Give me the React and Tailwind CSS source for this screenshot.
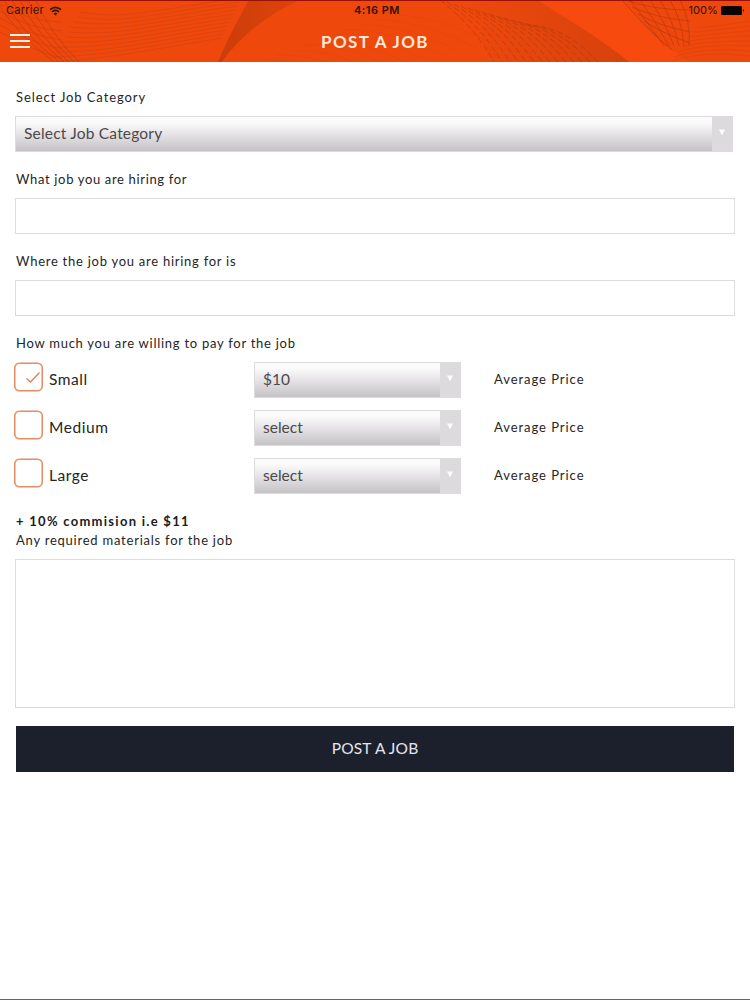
import React, { useState } from 'react'

const SIZES = [
  { name: 'Small', price: '$10' },
  { name: 'Medium', price: 'select' },
  { name: 'Large', price: 'select' },
]

const range = (n) => Array.from({ length: n }, (_, i) => i)

// Wavy mesh behind the header
function HeaderMesh() {
  return (
    <svg className="absolute inset-0" width="750" height="62" viewBox="0 0 750 62" fill="none">
      <defs>
        <linearGradient id="fold" x1="0" y1="0" x2="1" y2="0">
          <stop offset="0" stopColor="#a83208" stopOpacity="0.5" />
          <stop offset="1" stopColor="#b83708" stopOpacity="0.3" />
        </linearGradient>
        <linearGradient id="slope" x1="0" y1="0" x2="1" y2="0">
          <stop offset="0" stopColor="#b83a0c" stopOpacity="0" />
          <stop offset="1" stopColor="#b83a0c" stopOpacity="0.45" />
        </linearGradient>
      </defs>
      <rect width="750" height="62" fill="#ee480c" />
      <path d="M537 0H625C645 24 660 45 690 62H629C600 38 565 18 537 0Z" fill="#f64a0e" />
      <path d="M218 62 C228 38 240 16 249 0 L300 0 C270 13 240 36 222 62Z" fill="url(#fold)" />
      <path d="M470 0 L537 0 C565 18 600 38 629 62 L490 62Z" fill="url(#slope)" />
      <g stroke="#a83a14" strokeWidth="0.8" opacity="0.28">
        {range(11).map((i) => (
          <path key={i} d={`M${50 + i * 3} ${62 - i * 5} C${100 + i * 3} ${60 - i * 4} ${150} ${50 - i * 4} ${222 + i * 2} ${38 - i * 4}`} />
        ))}
        {range(10).map((i) => (
          <path key={i} d={`M${262 + i * 14} ${60 - i * 5} q40 -2 ${80 + i * 3} ${20 + i}`} opacity="0.35" />
        ))}
      </g>
      <g stroke="#8f3010" strokeWidth="0.8" opacity="0.4">
        {range(6).map((i) => (
          <path key={i} d={`M${-4 + i * 8} 0 Q${14 + i * 7} 32 ${54 + i * 5} 62`} />
        ))}
        {range(5).map((i) => (
          <path key={i} d={`M0 ${4 + i * 7} Q30 ${22 + i * 7} 62 ${22 + i * 9}`} opacity="0.6" />
        ))}
      </g>
      <g stroke="#8f3010" strokeWidth="0.9" strokeDasharray="6 3" opacity="0.42">
        {range(14).map((i) => (
          <path key={i} d={`M${440 + i * 7} ${i * 2} Q${474 + i * 7} 26 ${494 + i * 8} 62`} />
        ))}
      </g>
      <g stroke="#8a2c0e" strokeWidth="0.8" opacity="0.55">
        <path d="M622 0 C640 20 650 32 672 50" />
        {range(6).map((i) => (
          <path key={i} d={`M${630 + i * 10} 0 Q${646 + i * 9} 20 ${664 + i * 5} 46`} opacity="0.75" />
        ))}
        {range(4).map((i) => (
          <path key={i} d={`M${626 + i * 6} ${i * 7} Q${652 + i * 4} ${10 + i * 8} 690 ${10 + i * 11}`} opacity="0.75" />
        ))}
        {range(8).map((i) => (
          <path key={i} d={`M${670 + i * 4} ${62 - i * 5} Q700 ${50 - i * 3} 750 ${56 - i * 5}`} opacity="0.25" />
        ))}
      </g>
      <rect width="750" height="1" fill="#9c0f08" />
    </svg>
  )
}

function Label({ children, className = 'tracking-[0.74px]' }) {
  return (
    <div className={`h-5 mb-2 pl-px text-[13px] leading-[18px] text-[#252525] whitespace-nowrap ${className}`}>
      {children}
    </div>
  )
}

function Select({ value, className }) {
  return (
    <div className={`flex h-9 border border-[#dddbde] ${className}`}>
      <div className="flex-1 pl-2 text-[15.5px] leading-[33px] text-[#4b494c] bg-linear-to-b from-[#fcfbfc] from-15% via-[#e2e0e3] via-55% to-[#c6c3c7]">
        {value}
      </div>
      <div className="w-5 pt-3 bg-[#dcdadd] flex justify-center">
        <svg width="8" height="7" viewBox="0 0 8 7" className="mr-px">
          <path d="M1 0.5h6L4 6.5z" fill="#fff" />
        </svg>
      </div>
    </div>
  )
}

function Checkbox({ checked, onChange }) {
  return (
    <button onClick={onChange} className="w-7 h-7 -ml-px mr-px translate-x-[0.5px] rounded-[5px] border-[1.5px] border-[#e58a62] bg-white shadow-[0_0_0_0.5px_#e58a62]">
      {checked && (
        <svg width="25" height="25" viewBox="0 0 25 25" fill="none">
          <path d="M11 13.5l4 3.5 9-9.5" stroke="#e2804f" strokeWidth="1.3" />
        </svg>
      )}
    </button>
  )
}

export default function App() {
  const [selected, setSelected] = useState('Small')

  return (
    <div className="w-[750px] h-[1000px] flex flex-col bg-white border-b border-[#666] overflow-hidden font-['Lato','Liberation_Sans',sans-serif]">
      {/* Header */}
      <header className="relative h-[62px] shrink-0">
        <HeaderMesh />
        <div className="relative grid grid-cols-3 items-center h-[21px] pl-1.5 pr-[5px] text-[11px] text-[#321008] font-['Inter',sans-serif]">
          <div className="flex items-center gap-[5px]">
            <span className="tracking-[0.25px]">Carrier</span>
            <svg width="13" height="10" viewBox="0 0 13 10" fill="none" stroke="#321008" strokeWidth="1.6">
              <path d="M1 3.6Q6.5 -1 12 3.6M3 5.8Q6.5 3 10 5.8" />
              <path d="M4.6 7.4Q6.5 6 8.4 7.4L6.5 9.5z" fill="#321008" stroke="none" />
            </svg>
          </div>
          <div className="text-center font-semibold tracking-[0.5px] pl-[3px]">4:16 PM</div>
          <div className="flex items-center justify-end gap-[3px]">
            <span className="tracking-[0.1px]">100%</span>
            <svg width="24" height="9" viewBox="0 0 24 9" fill="#0c0301">
              <rect width="21" height="9" rx="1.5" />
              <path d="M22 3q2 1.5 0 3z" />
            </svg>
          </div>
        </div>
        <div className="relative flex items-center h-[41px] px-2.5">
          <div className="w-5 flex flex-col gap-1 pb-px">
            <span className="h-0.5 bg-[#fff0e4]" />
            <span className="h-0.5 bg-[#fff0e4]" />
            <span className="h-0.5 bg-[#fff0e4]" />
          </div>
          <h1 className="flex-1 text-center pr-5 text-[17px] font-bold tracking-[1.4px] text-[#ffe9d8]">POST A JOB</h1>
        </div>
      </header>

      {/* Form */}
      <main className="px-[15px] pt-[26px]">
        <Label className="tracking-[0.9px]">Select Job Category</Label>
        <Select value={<span className="tracking-[0.2px]">Select Job Category</span>} className="w-[718px] mb-[18px]" />

        <Label className="tracking-[0.66px]">What job you are hiring for</Label>
        <input className="block w-full h-9 mb-[18px] px-2 border border-[#dcdcdc] outline-none" />

        <Label>Where the job you are hiring for is</Label>
        <input className="block w-full h-9 mb-[18px] px-2 border border-[#dcdcdc] outline-none" />

        <Label>How much you are willing to pay for the job</Label>
        <div className="flex flex-col gap-3">
          {SIZES.map((size) => (
            <div key={size.name} className="flex h-9">
              <div className="flex w-[239px] pt-px">
                <Checkbox checked={selected === size.name} onChange={() => setSelected(size.name)} />
                <span className="pl-1.5 text-[15.5px] leading-8 tracking-[0.55px] text-[#252525]">{size.name}</span>
              </div>
              <Select value={size.price} className="w-[207px]" />
              <span className="pl-[33px] text-[13px] leading-[35px] tracking-[0.95px] text-[#252525]">Average Price</span>
            </div>
          ))}
        </div>

        <div className="mt-[17px] pl-px h-5 text-[13px] leading-5 font-bold tracking-[1.28px] text-[#1c1c1c]">
          + 10% commision i.e $11
        </div>
        <Label className="tracking-[0.77px]">Any required materials for the job</Label>
        <textarea className="block w-full h-[149px] p-2 border border-[#dcdcdc] resize-none outline-none" />

        <button className="block w-[718px] h-[46px] mt-[18px] ml-px pb-px bg-[#1c202d] text-[15.5px] tracking-[0.2px] text-[#e4e6ec]">
          POST A JOB
        </button>
      </main>
    </div>
  )
}
